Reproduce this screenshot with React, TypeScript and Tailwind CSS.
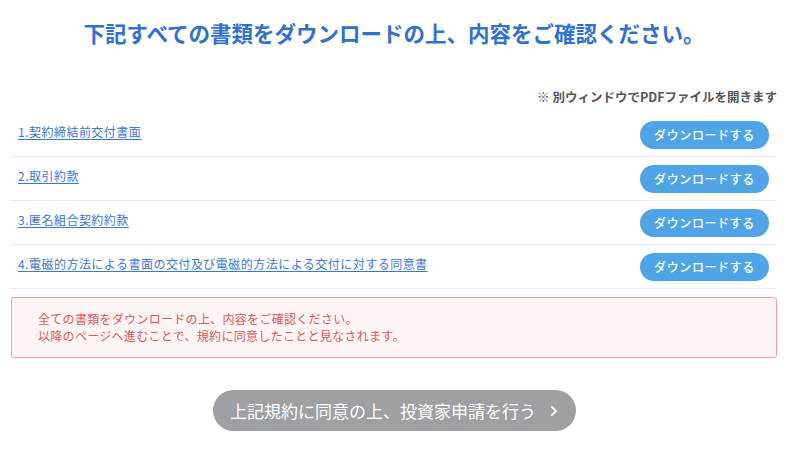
import React from "react";

const docs = [
  "1.契約締結前交付書面",
  "2.取引約款",
  "3.匿名組合契約約款",
  "4.電磁的方法による書面の交付及び電磁的方法による交付に対する同意書",
];

export default function App() {
  return (
    <div
      className="w-[800px] h-[453px] bg-white overflow-hidden"
      style={{ fontFamily: '"Noto Sans CJK JP", "Noto Sans", sans-serif' }}
    >
      <div className="ml-[11px] w-[766px] flex flex-col">
        <h1 className="mt-[17px] text-center text-[21.5px] leading-[31px] font-bold text-[#2f6fd8]">
          下記すべての書類をダウンロードの上、内容をご確認ください。
        </h1>
        <p className="mt-[40px] text-right text-[12.5px] leading-[18px] font-bold text-[#555555]">
          ※ 別ウィンドウでPDFファイルを開きます
        </p>
        <div className="mt-[7px] flex flex-col">
          {docs.map((d) => (
            <div
              key={d}
              className="flex items-start justify-between border-b border-[#e6edf9] pt-[8px] pb-[7px] pl-[7px] pr-[8px]"
            >
              <a
                href="#"
                className="mt-[2px] text-[12px] leading-[18px] tracking-[0.04em] text-[#3a76d6] underline underline-offset-2"
              >
                {d}
              </a>
              <button className="h-[28px] w-[129px] shrink-0 rounded-full bg-[#4fa4e7] text-[12px] tracking-[0.05em] font-medium text-white">
                ダウンロードする
              </button>
            </div>
          ))}
        </div>
        <div className="mt-[8px] rounded-[3px] border border-[#e8a2a2] bg-[#fdf5f5] pt-[12px] pb-[13px] pl-[26px] text-[12px] leading-[17px] tracking-[0.025em] text-[#d85a5a]">
          <p>全ての書類をダウンロードの上、内容をご確認ください。</p>
          <p>以降のページへ進むことで、規約に同意したことと見なされます。</p>
        </div>
        <div className="mt-[32px] flex justify-center">
          <button className="flex h-[41px] w-[363px] items-center justify-center gap-[14px] rounded-full bg-[#9ea0a3] text-[17px] text-white">
            <span>上記規約に同意の上、投資家申請を行う</span>
            <svg width="8" height="12" viewBox="0 0 8 12" fill="none">
              <path d="M2 2l4 4-4 4" stroke="white" strokeWidth="1.8" strokeLinecap="round" strokeLinejoin="round" />
            </svg>
          </button>
        </div>
      </div>
    </div>
  );
}
